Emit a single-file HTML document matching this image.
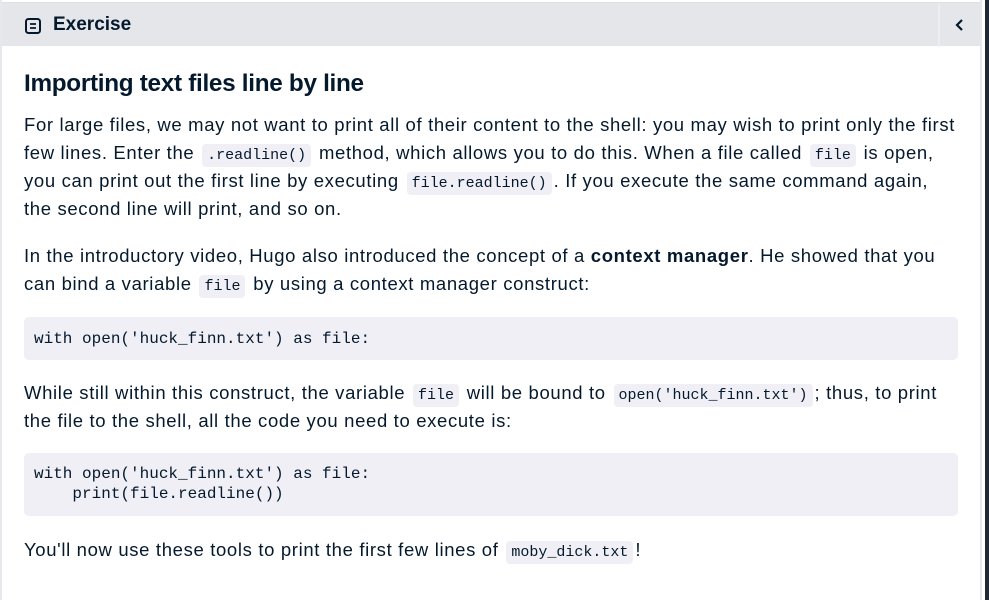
<!DOCTYPE html>
<html><head><meta charset="utf-8"><style>
*{margin:0;padding:0;box-sizing:border-box}
body{width:989px;height:600px;overflow:hidden;background:#fff;font-family:"Liberation Sans",sans-serif;color:#05192d;position:relative}
.frame{position:absolute;left:0;top:0;width:982px;height:600px;border-left:2px solid #e8e8ec;border-right:2px solid #e8e8ec;background:#fff}
.dark{position:absolute;left:985px;top:0;width:4px;height:600px;background:#1f2a36}
.hdr{position:absolute;left:2px;top:2px;width:978px;height:44px;background:#e5e6ea;border-top:1px solid #e0e0e4}
.hdr .t{position:absolute;left:51px;top:11px;font-size:19px;font-weight:bold}
.hdr .ic{position:absolute;left:23px;top:15px}
.hdr .div{position:absolute;left:936px;top:0;width:2px;height:44px;background:#eceef0}
.hdr .chev{position:absolute;left:952px;top:15px}
h1{position:absolute;left:24px;top:70px;font-size:24.3px;font-weight:bold;letter-spacing:-0.3px;white-space:nowrap}
.p{position:absolute;left:24px;font-size:18.5px;letter-spacing:0.65px;line-height:28px;white-space:nowrap;color:#05192d}
code{font-family:"Liberation Mono",monospace;font-size:15px;letter-spacing:0;line-height:1;background:#efeff5;border-radius:4px;padding:3px 5px;margin:0 2px}
pre{position:absolute;left:24px;width:934px;background:#efeff5;border-radius:5px;font-family:"Liberation Mono",monospace;font-size:16px;line-height:20px;padding:0 10px;color:#05192d}
</style></head><body>
<div class="frame"></div><div class="dark"></div>
<div class="hdr">
<svg class="ic" width="16" height="16" viewBox="0 0 16 16"><rect x="1" y="1" width="14" height="14" rx="2.5" fill="none" stroke="#05192d" stroke-width="2"/><path d="M5 6h6M5 10h6" stroke="#05192d" stroke-width="1.8"/></svg>
<div class="t">Exercise</div>
<div class="div"></div>
<svg class="chev" width="12" height="14" viewBox="0 0 12 14"><path d="M8 2L3 7l5 5" fill="none" stroke="#05192d" stroke-width="2.2"/></svg>
</div>
<h1>Importing text files line by line</h1>
<div class="p" style="top:111px">For large files, we may not want to print all of their content to the shell: you may wish to print only the first<br>few lines. Enter the <code>.readline()</code> method, which allows you to do this. When a file called <code>file</code> is open,<br>you can print out the first line by executing <code>file.readline()</code>. If you execute the same command again,<br>the second line will print, and so on.</div>
<div class="p" style="top:242px">In the introductory video, Hugo also introduced the concept of a <b>context manager</b>. He showed that you<br>can bind a variable <code>file</code> by using a context manager construct:</div>
<pre style="top:317px;height:43px;padding-top:12px">with open('huck_finn.txt') as file:</pre>
<div class="p" style="top:379px">While still within this construct, the variable <code>file</code> will be bound to <code>open('huck_finn.txt')</code>; thus, to print<br>the file to the shell, all the code you need to execute is:</div>
<pre style="top:453px;height:63px;padding-top:11px">with open('huck_finn.txt') as file:
    print(file.readline())</pre>
<div class="p" style="top:536px">You'll now use these tools to print the first few lines of <code>moby_dick.txt</code>!</div>
</body></html>
